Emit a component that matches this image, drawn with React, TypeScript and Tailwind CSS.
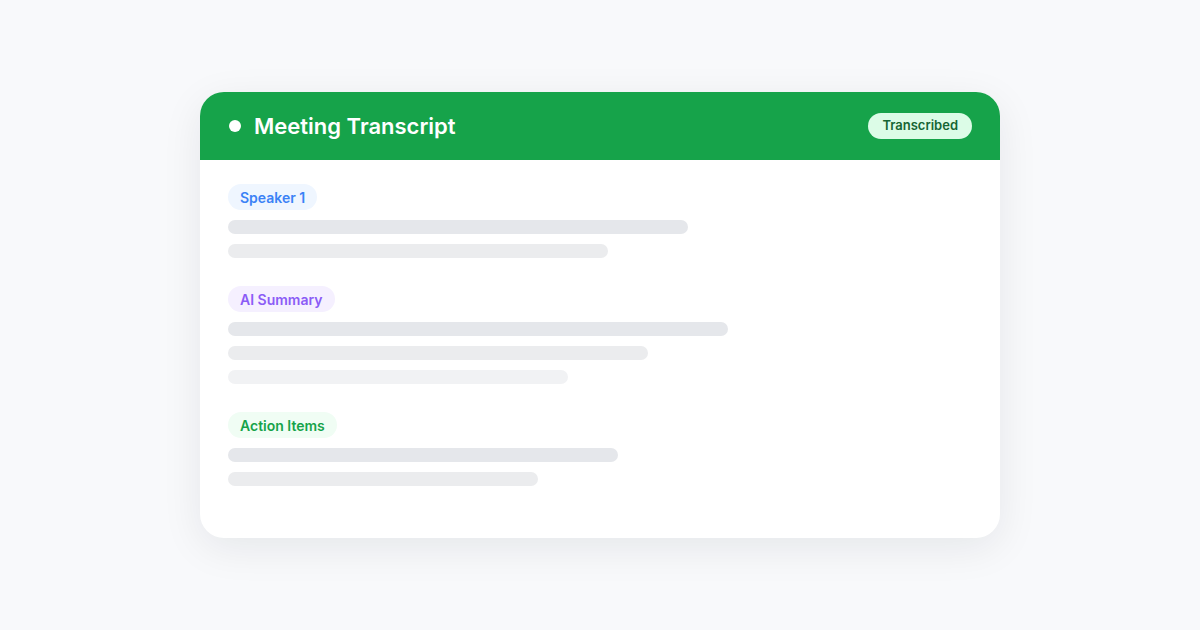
export default function App() {
  const sections = [
    {
      label: 'Speaker 1',
      pill: 'bg-[#eff6ff] text-[#3b82f6]',
      bars: [460, 380],
    },
    {
      label: 'AI Summary',
      pill: 'bg-[#f5f0ff] text-[#8b5cf6]',
      bars: [500, 420, 340],
    },
    {
      label: 'Action Items',
      pill: 'bg-[#f0fdf4] text-[#16a34a]',
      bars: [390, 310],
    },
  ];
  const barColors = ['bg-[#e5e7eb]', 'bg-[#ebecee]', 'bg-[#f1f2f4]'];

  return (
    <div
      className="h-[630px] w-full bg-[#f8f9fb] flex items-center justify-center"
      style={{ fontFamily: 'Inter, Roboto, "Noto Sans", sans-serif' }}
    >
      <div className="w-[800px] bg-white rounded-[24px] overflow-hidden shadow-[0_10px_40px_rgba(15,23,42,0.08)]">
        {/* Header */}
        <div className="h-[68px] bg-[#16a34a] flex items-center justify-between pl-[29px] pr-[28px]">
          <div className="flex items-center gap-[13px]">
            <span className="w-[12px] h-[12px] rounded-full bg-white" />
            <span className="text-white text-[22px] font-semibold">Meeting Transcript</span>
          </div>
          <span className="h-[26px] px-[14px] flex items-center rounded-full bg-[#dcfce7] text-[#166534] text-[13px] font-semibold">
            Transcribed
          </span>
        </div>

        {/* Body */}
        <div className="px-7 pt-6 pb-[52px] flex flex-col gap-[28px]">
          {sections.map((s) => (
            <div key={s.label} className="flex flex-col gap-[10px]">
              <span className={`self-start h-[26px] px-3 flex items-center rounded-full text-[14px] font-semibold ${s.pill}`}>
                {s.label}
              </span>
              {s.bars.map((w, i) => (
                <div key={i} className={`h-[14px] rounded-full ${barColors[i]}`} style={{ width: w }} />
              ))}
            </div>
          ))}
        </div>
      </div>
    </div>
  );
}
